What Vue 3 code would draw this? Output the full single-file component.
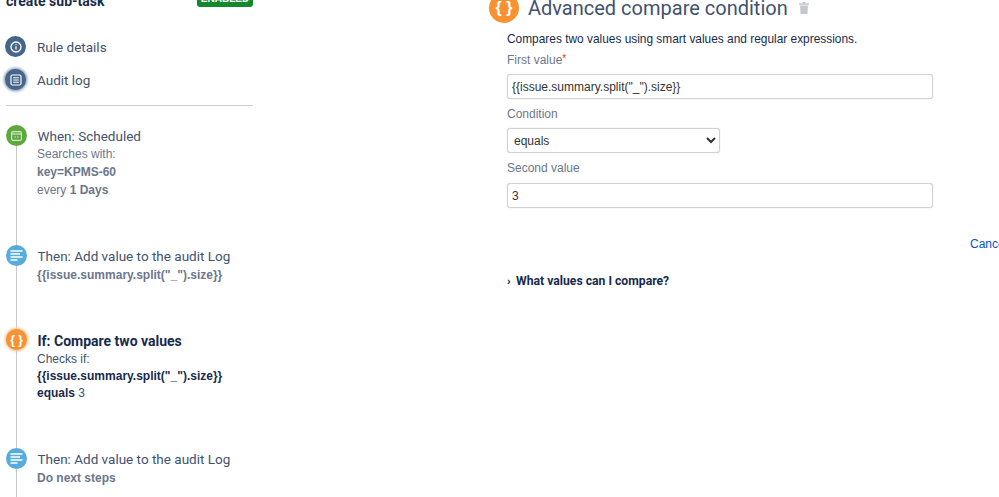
<script setup>
const summary = '{{issue.summary.split("_").size}}'
</script>

<template>
  <div class="page">
    <aside class="side">
      <div class="rule-head">
        <span class="rule-name">create sub-task</span>
        <span class="badge">ENABLED</span>
      </div>

      <nav class="side-nav">
        <a class="nav-item">
          <span class="dot dot-nav">
            <svg width="12" height="12" viewBox="0 0 12 12" fill="none" stroke="#fff">
              <circle cx="6" cy="6" r="5" stroke-width="1.3" />
              <path d="M6 5.2v3.4M6 3.2v1" stroke-width="1.3" />
            </svg>
          </span>
          Rule details
        </a>
        <a class="nav-item">
          <span class="dot dot-nav dot-active">
            <svg width="12" height="12" viewBox="0 0 12 12" fill="none" stroke="#fff">
              <rect x="1" y="1" width="10" height="10" rx="1.5" stroke-width="1.2" />
              <path d="M3.2 3.8h5.6M3.2 6h5.6M3.2 8.2h5.6" stroke-width="1" />
            </svg>
          </span>
          Audit log
        </a>
      </nav>

      <div class="steps">
        <div class="step step-when">
          <div class="rail">
            <span class="dot dot-green">
              <svg width="11" height="10" viewBox="0 0 11 10" fill="none" stroke="#d5e8c8">
                <rect x="0.6" y="0.6" width="9.8" height="8.8" rx="1.4" stroke-width="1.1" />
                <path d="M1 3h9" stroke-width="1.2" />
                <path d="M3.5 6h1.5M6 6h1.5" stroke-width="1" />
              </svg>
            </span>
            <span class="line"></span>
          </div>
          <div class="step-body">
            <div class="step-title">When: Scheduled</div>
            <div class="sub">Searches with:</div>
            <div class="sub"><b>key=KPMS-60</b></div>
            <div class="sub">every <b>1 Days</b></div>
          </div>
        </div>

        <div class="step step-log">
          <div class="rail">
            <span class="dot dot-blue">
              <svg width="13" height="11" viewBox="0 0 13 11" stroke="#fff" stroke-width="1.5">
                <path d="M0.5 1h12M0.5 4h9.5M0.5 7h12M0.5 10h7" />
              </svg>
            </span>
            <span class="line"></span>
          </div>
          <div class="step-body">
            <div class="step-title">Then: Add value to the audit Log</div>
            <div class="sub"><b>{{ summary }}</b></div>
          </div>
        </div>

        <div class="step step-if">
          <div class="rail">
            <span class="dot dot-orange">{ }</span>
            <span class="line"></span>
          </div>
          <div class="step-body active">
            <div class="step-title">If: Compare two values</div>
            <div class="sub">Checks if:</div>
            <div class="sub"><b>{{ summary }}</b></div>
            <div class="sub"><b>equals</b> 3</div>
          </div>
        </div>

        <div class="step step-last">
          <div class="rail">
            <span class="dot dot-blue">
              <svg width="13" height="11" viewBox="0 0 13 11" stroke="#fff" stroke-width="1.5">
                <path d="M0.5 1h12M0.5 4h9.5M0.5 7h12M0.5 10h7" />
              </svg>
            </span>
            <span class="line"></span>
          </div>
          <div class="step-body">
            <div class="step-title">Then: Add value to the audit Log</div>
            <div class="sub"><b>Do next steps</b></div>
          </div>
        </div>
      </div>
    </aside>

    <main class="main">
      <div class="title-row">
        <span class="title-icon">{ }</span>
        <h1 class="title">Advanced compare condition</h1>
        <svg class="trash" width="10" height="12" viewBox="0 0 10 12" fill="#c4c7cc">
          <rect x="3.5" y="0" width="3" height="1.5" />
          <rect x="0" y="1.2" width="10" height="1.6" />
          <path d="M1 3.4h8l-.6 8.6H1.6z" />
        </svg>
      </div>

      <div class="form">
        <p class="desc">Compares two values using smart values and regular expressions.</p>

        <label class="label label-first">First value<span class="req">*</span></label>
        <input class="field" type="text" :value="summary" readonly />

        <label class="label">Condition</label>
        <select class="field field-select">
          <option>equals</option>
        </select>

        <label class="label label-second">Second value</label>
        <input class="field" type="text" value="3" readonly />

        <div class="actions"><a class="cancel">Cancel</a></div>

        <div class="help">
          <span class="chev">›</span>
          <span class="help-text">What values can I compare?</span>
        </div>
      </div>
    </main>
  </div>
</template>

<style>
html,
body {
  margin: 0;
  background: #fff;
  overflow: hidden;
}
</style>

<style scoped>
.page {
  display: flex;
  width: 999px;
  height: 497px;
  overflow: hidden;
  font-family: "Liberation Sans", Arial, sans-serif;
  font-size: 12px;
  color: #172b4d;
}

/* sidebar */
.side {
  flex: none;
  width: 247px;
  margin-left: 6px;
  display: flex;
  flex-direction: column;
}

.rule-head {
  display: flex;
  justify-content: space-between;
  align-items: flex-end;
  height: 7px;
}

.rule-name {
  font-family: Roboto, sans-serif;
  font-weight: 700;
  font-size: 14px;
  line-height: 16px;
  color: #172b4d;
  margin-bottom: -2px;
}

.badge {
  box-sizing: border-box;
  width: 56px;
  height: 16px;
  flex: none;
  display: flex;
  align-items: flex-end;
  justify-content: center;
  padding-bottom: 3px;
  background: #14892c;
  border-radius: 3px;
  color: #fff;
  font-size: 10px;
  font-weight: 700;
  line-height: 10px;
}

.side-nav {
  display: flex;
  flex-direction: column;
  gap: 12px;
  padding: 29px 0 15px;
  border-bottom: 1px solid #ccc;
}

.nav-item {
  display: flex;
  align-items: center;
  gap: 11px;
  height: 21px;
  margin-left: -1px;
  font-family: Roboto, sans-serif;
  font-size: 13.5px;
  color: #42526e;
}

.dot {
  flex: none;
  width: 21px;
  height: 21px;
  border-radius: 50%;
  display: flex;
  align-items: center;
  justify-content: center;
}

.dot-nav {
  background: #45658c;
}

.dot-active {
  box-shadow: 0 0 3px 1px #7a8fa8;
}

.dot-green {
  background: #5fa83f;
}

.dot-blue {
  background: #56acdf;
}

.dot-orange {
  background: #f79232;
  box-shadow: 0 0 3px 1px #fbbd85;
  color: #fff;
  font-weight: 700;
  font-size: 12px;
  white-space: pre;
}

.steps {
  display: flex;
  flex-direction: column;
  flex: 1;
  padding-top: 19px;
}

.step {
  display: flex;
  gap: 11px;
}

.step-when {
  height: 120px;
}

.step-log {
  height: 84px;
}

.step-if {
  height: 119px;
}

.step-last {
  flex: 1;
}

.rail {
  flex: none;
  width: 21px;
  display: flex;
  flex-direction: column;
  align-items: center;
}

.line {
  flex: 1;
  width: 1px;
  background: #c9c9c9;
}

.step-body {
  padding-top: 3px;
  color: #6b778c;
  white-space: nowrap;
}

.step-title {
  font-family: Roboto, sans-serif;
  font-size: 13.5px;
  line-height: 16px;
  color: #42526e;
  margin-bottom: 2px;
  margin-left: -0.5px;
}

.step-when .step-title {
  margin-bottom: 1px;
}

.sub {
  line-height: 18px;
  margin-left: -1px;
  color: #6b778c;
}

.step-if .step-body {
  padding-top: 4px;
}

.active .step-title {
  font-size: 14px;
  font-weight: 700;
  color: #172b4d;
}

.active .sub {
  color: #42526e;
  line-height: 17px;
}

.active b {
  color: #172b4d;
}

/* main panel */
.main {
  flex: 1;
  min-width: 0;
  padding-left: 236px;
  display: flex;
  flex-direction: column;
}

.title-row {
  display: flex;
  align-items: center;
  margin-top: -7px;
  height: 30px;
}

.title-icon {
  flex: none;
  width: 30px;
  height: 30px;
  border-radius: 50%;
  background: #f79232;
  color: #fff;
  font-weight: 700;
  font-size: 16px;
  display: flex;
  align-items: center;
  justify-content: center;
  white-space: pre;
}

.title {
  margin: 0 0 0 9px;
  font-family: Roboto, sans-serif;
  font-size: 20px;
  font-weight: 400;
  color: #42526e;
  white-space: nowrap;
}

.trash {
  margin-left: 11px;
}

.form {
  display: flex;
  flex-direction: column;
  align-items: flex-start;
  padding-left: 18px;
  padding-top: 8px;
}

.desc {
  margin: 0;
  font-size: 11.9px;
  line-height: 16px;
  color: #172b4d;
  white-space: nowrap;
}

.label {
  display: block;
  line-height: 16px;
  color: #6b778c;
  margin-top: 7px;
  margin-bottom: 6px;
}

.label-first {
  margin-top: 4px;
  margin-bottom: 6px;
}

.label-second {
  margin-bottom: 7px;
}

.req {
  color: #de350b;
  font-size: 10px;
  vertical-align: 2px;
}

.field {
  box-sizing: border-box;
  display: block;
  width: 426px;
  height: 25px;
  padding: 0 4px;
  border: 1px solid #d2d2d2;
  border-radius: 3px;
  box-shadow: 0 0 1px #c8c8c8;
  background: #fff;
  font-family: "Liberation Sans", Arial, sans-serif;
  font-size: 12px;
  color: #333;
  outline: none;
}

.field-select {
  width: 213px;
  padding: 0 2px;
}

.actions {
  margin-top: 29px;
  padding-left: 463px;
  line-height: 14px;
  white-space: nowrap;
}

.cancel {
  color: #0052cc;
}

.help {
  display: flex;
  align-items: center;
  gap: 6px;
  margin-top: 23px;
  line-height: 14px;
}

.chev {
  font-size: 11px;
  font-weight: 700;
  color: #172b4d;
  width: 3px;
}

.help-text {
  font-family: Roboto, sans-serif;
  font-size: 12.2px;
  font-weight: 700;
  color: #172b4d;
}
</style>
